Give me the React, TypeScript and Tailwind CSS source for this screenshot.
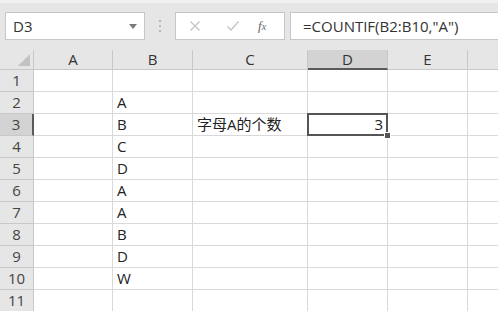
import React from "react";

const cols = [
  { key: "A", w: 79 },
  { key: "B", w: 80 },
  { key: "C", w: 115 },
  { key: "D", w: 80 },
  { key: "E", w: 80 },
  { key: "F", w: 80 },
];

const data: Record<number, Record<string, string>> = {
  2: { B: "A" },
  3: { B: "B", C: "字母A的个数", D: "3" },
  4: { B: "C" },
  5: { B: "D" },
  6: { B: "A" },
  7: { B: "A" },
  8: { B: "B" },
  9: { B: "D" },
  10: { B: "W" },
};

const font = { fontFamily: '"Open Sans", "Noto Sans CJK SC", sans-serif' };

function TopBar() {
  return (
    <div className="flex h-[50px] items-start bg-[#e6e6e6] pt-[12px] border-t-[3px] border-[#f0f0f0]">
      <div className="ml-[5px] flex h-[28px] w-[140px] -mt-[3px] items-center justify-between border border-[#c6c6c6] bg-white pl-[7px] pr-[7px]">
        <span className="text-[15px] text-[#333]">D3</span>
        <span className="h-0 w-0 border-x-[4px] border-t-[5px] border-x-transparent border-t-[#7a7a7a]" />
      </div>
      <div className="-mt-[3px] flex w-[30px] h-[28px] flex-col items-center justify-center gap-[3px]">
        <span className="h-[2px] w-[2px] bg-[#b8b8b8]" />
        <span className="h-[2px] w-[2px] bg-[#b8b8b8]" />
        <span className="h-[2px] w-[2px] bg-[#b8b8b8]" />
      </div>
      <div className="-mt-[3px] flex h-[28px] w-[110px] items-center border border-[#c6c6c6] bg-white">
        <svg width="12" height="12" viewBox="0 0 12 12" className="ml-[13px]">
          <path d="M1.5 1.5 L10.5 10.5 M10.5 1.5 L1.5 10.5" stroke="#c4c4c4" strokeWidth="1.3" fill="none" />
        </svg>
        <svg width="14" height="12" viewBox="0 0 14 12" className="ml-[25px]">
          <path d="M1.5 6.5 L5 10 L12.5 1.5" stroke="#c4c4c4" strokeWidth="1.4" fill="none" />
        </svg>
        <span
          className="ml-[18px] text-[13px] italic text-[#666]"
          style={{ fontFamily: '"Liberation Serif", serif' }}
        >
          f<span className="text-[10px]">x</span>
        </span>
      </div>
      <div className="-mt-[3px] ml-[5px] flex h-[28px] flex-1 items-center border border-r-0 border-[#c6c6c6] bg-white pl-[12px]">
        <span className="text-[15px] text-[#333]">=COUNTIF(B2:B10,"A")</span>
      </div>
    </div>
  );
}

function HeaderRow() {
  return (
    <div className="flex h-[20px] bg-[#e6e6e6]">
      <div className="relative w-[34px] shrink-0 border-r border-b border-[#c8c8c8]">
        <svg width="12" height="12" className="absolute bottom-[3px] right-[3px]">
          <path d="M12 0 L12 12 L0 12 Z" fill="#c2c2c2" />
        </svg>
      </div>
      {cols.map((c) => {
        const sel = c.key === "D";
        return (
          <div
            key={c.key}
            style={{ width: c.w }}
            className={
              sel
                ? "flex shrink-0 items-center justify-center border-r border-[#c8c8c8] border-b-2 border-b-[#5a5a5a] bg-[#d3d3d3] text-[15px] text-[#333]"
                : "flex shrink-0 items-center justify-center border-r border-b border-[#c8c8c8] text-[15px] text-[#333]"
            }
          >
            {c.key === "F" ? "" : c.key}
          </div>
        );
      })}
    </div>
  );
}

function Row({ n }: { n: number }) {
  const rowSel = n === 3;
  return (
    <div className="flex h-[22px]">
      <div
        className={
          rowSel
            ? "flex w-[34px] shrink-0 items-center justify-center border-b border-[#c8c8c8] border-r-2 border-r-[#5a5a5a] bg-[#d3d3d3] text-[15px] text-[#444]"
            : "flex w-[34px] shrink-0 items-center justify-center border-r border-b border-[#c8c8c8] bg-[#e6e6e6] text-[15px] text-[#444]"
        }
      >
        {n}
      </div>
      {cols.map((c) => {
        const v = data[n]?.[c.key] ?? "";
        const isSel = rowSel && c.key === "D";
        return (
          <div
            key={c.key}
            style={{ width: c.w }}
            className={
              c.key === "D" && v
                ? "relative flex shrink-0 items-center justify-end border-r border-b border-[#d9d9d9] pr-[4px] text-[15px] text-[#222]"
                : "relative flex shrink-0 items-center border-r border-b border-[#d9d9d9] pl-[4px] text-[15px] text-[#222] whitespace-nowrap"
            }
          >
            {v}
            {isSel && (
              <>
                <span className="absolute z-10 -left-[1px] -top-[1px] -right-[1px] -bottom-[1px] border-2 border-[#555]" />
                <span className="absolute z-20 -bottom-[4px] -right-[4px] h-[7px] w-[7px] border border-white bg-[#555]" />
              </>
            )}
          </div>
        );
      })}
    </div>
  );
}

export default function App() {
  return (
    <div className="h-[311px] w-[498px] overflow-hidden bg-white" style={font}>
      <TopBar />
      <HeaderRow />
      {Array.from({ length: 11 }, (_, i) => (
        <Row key={i} n={i + 1} />
      ))}
    </div>
  );
}
